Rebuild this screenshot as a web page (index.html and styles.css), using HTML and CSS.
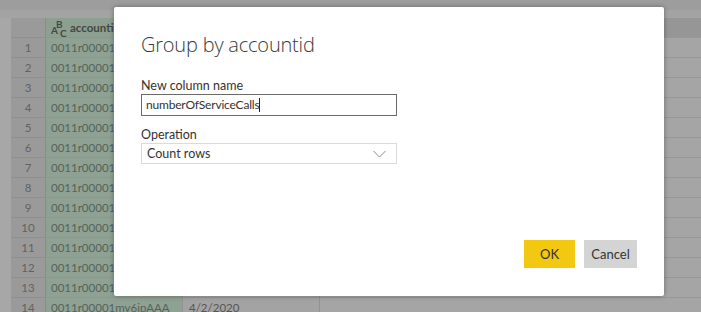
FILE: index.html
```html
<!DOCTYPE html>
<html lang="en">
<head>
    <meta charset="UTF-8">
    <title>Group by accountid</title>
    <link rel="stylesheet" href="styles.css">
</head>
<body>
    <div class="ribbon"></div>
    <div class="grid">
        <div class="cell head num"></div>
        <div class="cell head green"><span class="abc"><span class="a">A</span><span class="b">B</span><span class="c">C</span></span>accountid</div>
        <div class="cell head"></div>
        <div class="cell head rest"></div>

        <div class="cell num">1</div><div class="cell green"><span class="clip">0011r00001mv6jpAAA</span></div><div class="cell"></div><div class="cell rest"></div>
        <div class="cell num">2</div><div class="cell green"><span class="clip">0011r00001mv6jpAAA</span></div><div class="cell"></div><div class="cell rest"></div>
        <div class="cell num">3</div><div class="cell green"><span class="clip">0011r00001mv6jpAAA</span></div><div class="cell"></div><div class="cell rest"></div>
        <div class="cell num">4</div><div class="cell green"><span class="clip">0011r00001mv6jpAAA</span></div><div class="cell"></div><div class="cell rest"></div>
        <div class="cell num">5</div><div class="cell green"><span class="clip">0011r00001mv6jpAAA</span></div><div class="cell"></div><div class="cell rest"></div>
        <div class="cell num">6</div><div class="cell green"><span class="clip">0011r00001mv6jpAAA</span></div><div class="cell"></div><div class="cell rest"></div>
        <div class="cell num">7</div><div class="cell green"><span class="clip">0011r00001mv6jpAAA</span></div><div class="cell"></div><div class="cell rest"></div>
        <div class="cell num">8</div><div class="cell green"><span class="clip">0011r00001mv6jpAAA</span></div><div class="cell"></div><div class="cell rest"></div>
        <div class="cell num">9</div><div class="cell green"><span class="clip">0011r00001mv6jpAAA</span></div><div class="cell"></div><div class="cell rest"></div>
        <div class="cell num">10</div><div class="cell green"><span class="clip">0011r00001mv6jpAAA</span></div><div class="cell"></div><div class="cell rest"></div>
        <div class="cell num">11</div><div class="cell green"><span class="clip">0011r00001mv6jpAAA</span></div><div class="cell"></div><div class="cell rest"></div>
        <div class="cell num">12</div><div class="cell green"><span class="clip">0011r00001mv6jpAAA</span></div><div class="cell"></div><div class="cell rest"></div>
        <div class="cell num">13</div><div class="cell green"><span class="clip">0011r00001mv6jpAAA</span></div><div class="cell"></div><div class="cell rest"></div>
        <div class="cell num">14</div><div class="cell green">0011r00001mv6jpAAA</div><div class="cell date">4/2/2020</div><div class="cell rest"></div>
    </div>

    <div class="dialog">
        <h1>Group by accountid</h1>
        <label class="label first">New column name</label>
        <div class="input">numberOfServiceCalls<span class="caret"></span></div>
        <label class="label">Operation</label>
        <div class="select">
            Count rows
            <svg width="13" height="8" viewBox="0 0 13 8"><path d="M0.5 1 L6.5 7 L12.5 1" fill="none" stroke="#8a8a8a" stroke-width="1"/></svg>
        </div>
        <div class="buttons">
            <span class="btn ok">OK</span>
            <span class="btn cancel">Cancel</span>
        </div>
    </div>
</body>
</html>
```

FILE: styles.css
```css
body {
    margin: 0;
    width: 701px;
    height: 312px;
    overflow: hidden;
    background: #a7a7a7;
    font-family: Lato, "Open Sans", sans-serif;
    position: relative;
}
.ribbon {
    height: 10px;
    background: #9d9d9d;
    border-bottom: 8px solid #a3a3a3;
}
.grid {
    display: grid;
    grid-template-columns: 35px 137px 137px 1fr;
    grid-auto-rows: 20px;
    margin-left: 11px;
    font-size: 11.5px;
}
.cell {
    background: #a3a3a3;
    border-right: 1px solid #929292;
    border-bottom: 1px solid #979797;
    padding-left: 5px;
    line-height: 20px;
    white-space: nowrap;
    overflow: hidden;
    color: #555;
}
.cell.head { background: #979797; font-weight: bold; color: #3f4a41; }
.cell.num { background: #9a9a9a; text-align: center; padding-left: 0; color: #626262; border-bottom-color: #8f8f8f; border-right-color: #8c8c8c; }
.cell.green { background: #8fa193; color: #56635a; border-bottom-color: #889a8b; }
.cell.head.green { background: #8d9f91; color: #3f4a41; }
.cell.date { padding-left: 6px; }
.cell.rest { border-right: none; background: #a5a5a5; }
.cell.head.rest { background: #969696; }
.clip {
    display: block;
    width: 63px;
    overflow: hidden;
}
.abc {
    display: inline-block;
    position: relative;
    width: 16px;
    height: 19px;
    margin-right: 3px;
    font-size: 10px;
    vertical-align: top;
    color: #3f4a41;
}
.abc span { position: absolute; line-height: 10px; }
.abc .a { left: 0; top: 7px; }
.abc .b { left: 5px; top: 1px; }
.abc .c { left: 9px; top: 10px; }

.dialog {
    position: absolute;
    left: 114px;
    top: 7px;
    width: 550px;
    height: 289px;
    background: #fff;
    border-radius: 2px;
    box-shadow: 0 0 5px rgba(0, 0, 0, 0.35);
    padding: 0 27px;
    box-sizing: border-box;
    display: flex;
    flex-direction: column;
    color: #333;
}
.dialog h1 {
    margin: 23px 0 0;
    font-family: "Open Sans", sans-serif;
    font-size: 20px;
    font-weight: 300;
    letter-spacing: -0.2px;
    line-height: 30px;
    color: #3a3a3a;
}
.label {
    font-size: 12.5px;
    line-height: 16px;
    color: #333;
}
.label.first { margin-top: 18px; }
.input {
    width: 256px;
    height: 22px;
    box-sizing: border-box;
    border: 1.5px solid #6a6a6a;
    font-size: 12px;
    letter-spacing: -0.2px;
    line-height: 19px;
    padding-left: 4px;
    margin-bottom: 11px;
    color: #333;
}
.caret {
    display: inline-block;
    width: 1px;
    height: 14px;
    background: #222;
    vertical-align: -3px;
}
.select {
    width: 256px;
    height: 21px;
    box-sizing: border-box;
    border: 1px solid #dadada;
    font-size: 12.5px;
    line-height: 19px;
    padding: 0 10px 0 5px;
    display: flex;
    justify-content: space-between;
    align-items: center;
    color: #333;
}
.buttons {
    margin-top: auto;
    margin-bottom: 28px;
    display: flex;
    justify-content: flex-end;
    gap: 9px;
}
.btn {
    height: 28px;
    line-height: 28px;
    font-size: 13px;
    text-align: center;
    color: #333;
}
.ok { width: 51px; background: #f2c811; }
.cancel { width: 53px; background: #d4d4d4; }
```
